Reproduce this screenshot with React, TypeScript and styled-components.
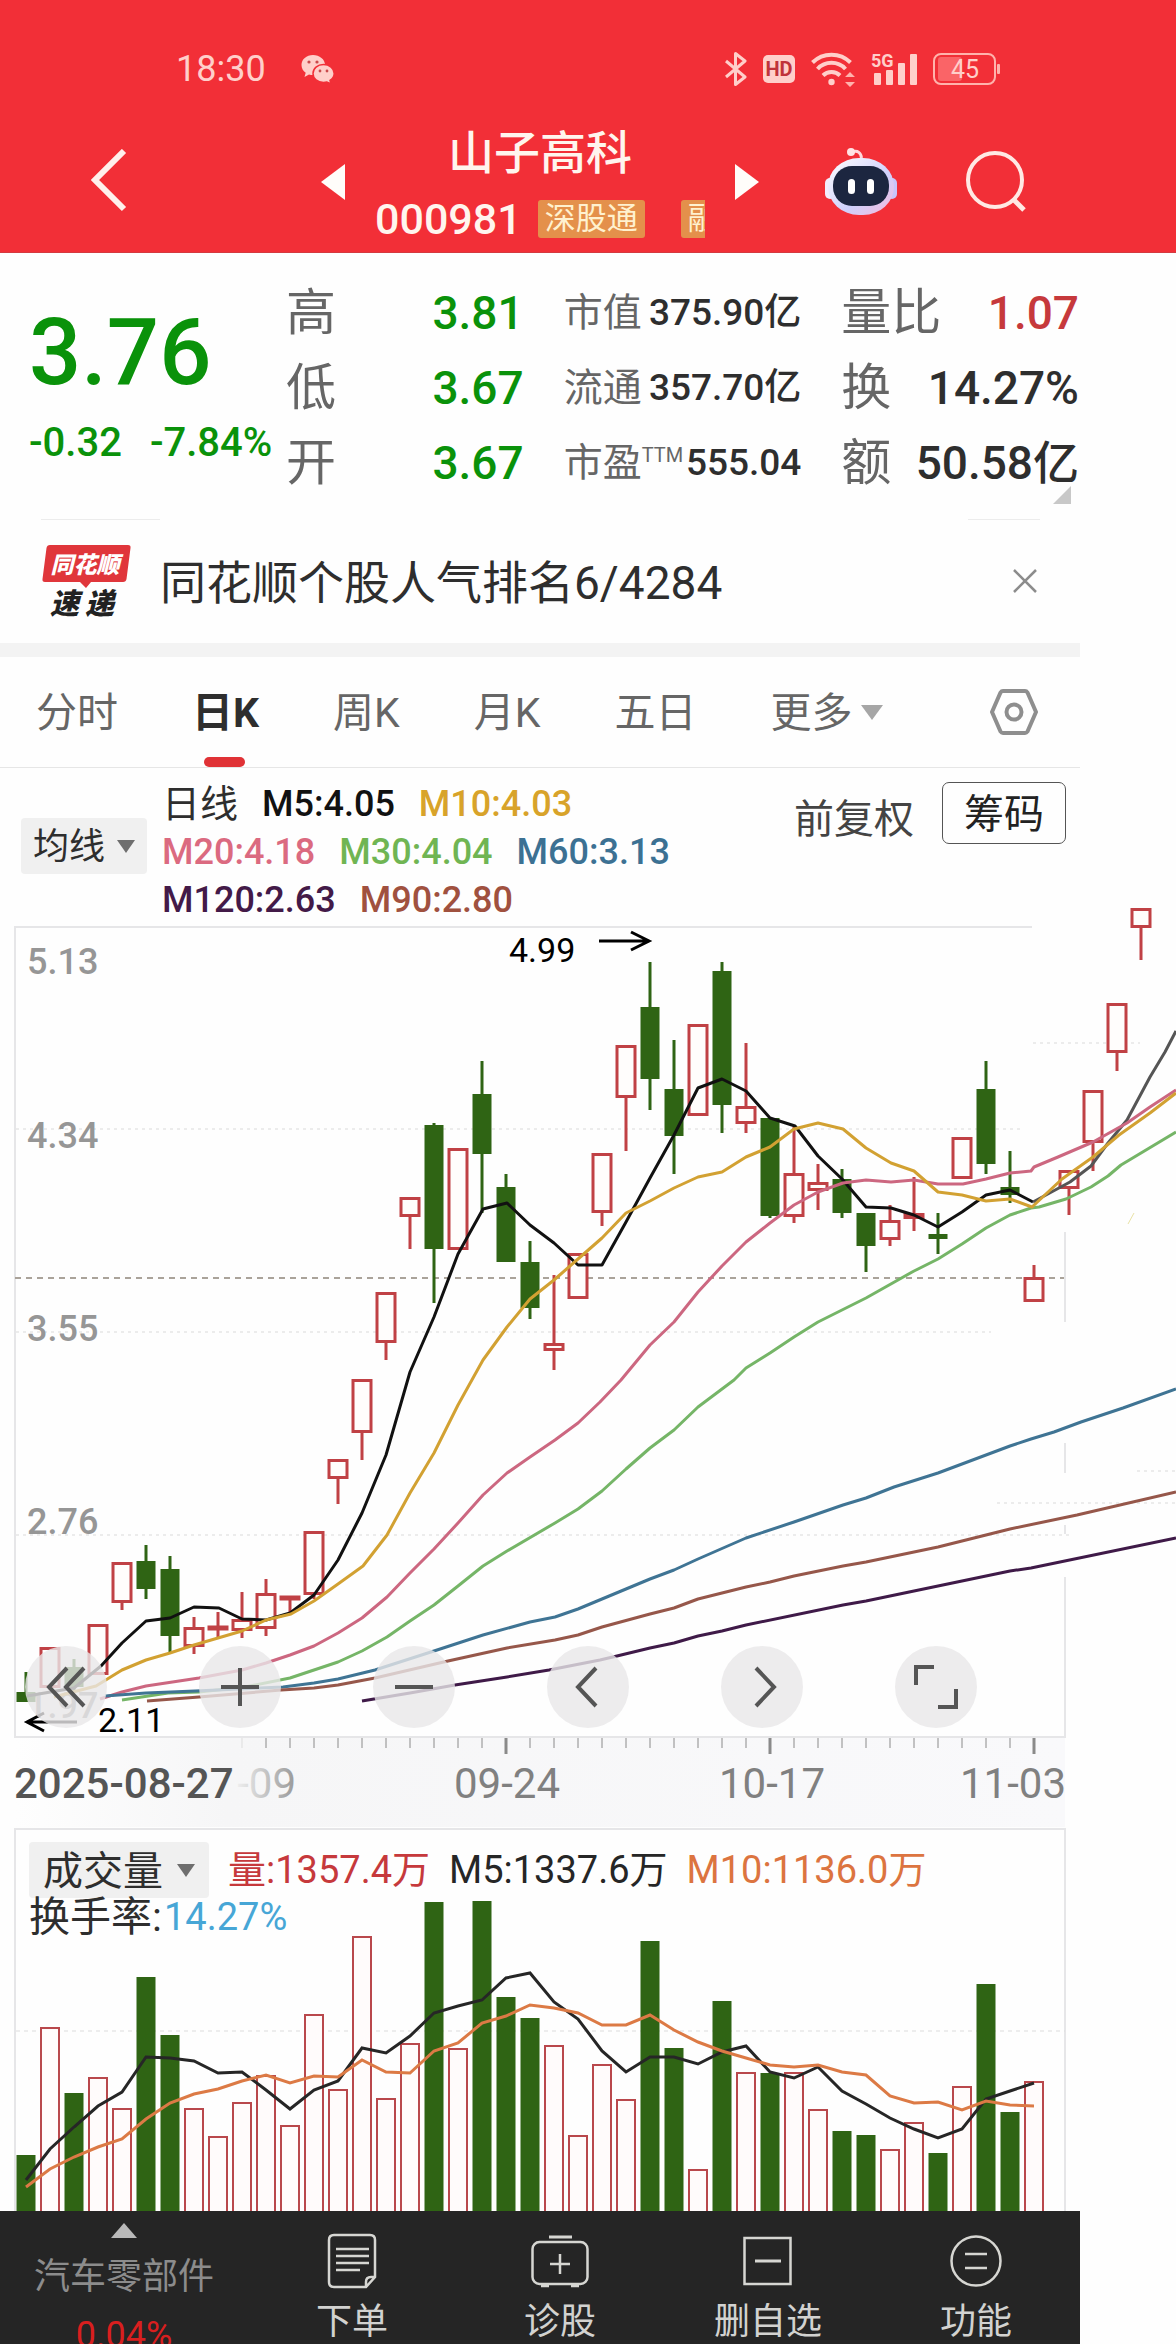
import React from "react";
import styled, { createGlobalStyle } from "styled-components";

const GlobalStyle = createGlobalStyle`
  *, *::before, *::after { box-sizing: border-box; }
  body {
    margin: 0;
    background: #fefefe;
    color: #2e2e2e;
    font-family: Roboto, "Noto Sans CJK SC", sans-serif;
  }
  button, select {
    margin: 0;
    padding: 0;
    border: 0;
    background: none;
    color: inherit;
    font: inherit;
    appearance: none;
    cursor: pointer;
  }
  svg { display: block; }
`;

const GREEN = "#0a920a";
const RED = "#c6393c";

/* ---------- header ---------- */

const Header = styled.header`
  background: #f22f37;
  color: #fff5ee;
  height: 253px;
  padding-top: 44px;
  border-bottom: 1px solid #d43a40;
`;

const StatusBar = styled.div`
  display: flex;
  align-items: center;
  justify-content: space-between;
  height: 50px;
  padding: 0 176px 0 176px;
  color: #ffcfca;
`;

const StatusGroup = styled.div<{ $gap: number }>`
  display: flex;
  align-items: center;
  gap: ${(p) => p.$gap}px;
`;

const Clock = styled.time`
  font-size: 36px;
  line-height: 50px;
`;

const TitleBar = styled.div`
  display: flex;
  align-items: center;
  padding: 18px 152px 0 91px;
  height: 158px;
`;

const IconButton = styled.button<{ $before?: number }>`
  flex: none;
  margin-left: ${(p) => p.$before ?? 0}px;
`;

const StockTitle = styled.div`
  width: 330px;
  margin: 0 30px;
  flex: none;
`;

const StockName = styled.h1`
  margin: 0 0 14px;
  font-size: 46px;
  line-height: 60px;
  font-weight: 500;
  text-align: center;
`;

const CodeRow = styled.div`
  display: flex;
  align-items: center;
  overflow-x: clip;
  height: 44px;
`;

const Code = styled.span`
  font-size: 43px;
  line-height: 44px;
  font-weight: 500;
  margin-right: 16px;
`;

const Badge = styled.span`
  flex: none;
  margin-right: 36px;
  padding: 0 7px;
  border-radius: 3px;
  background: #e4904b;
  color: #fff1cf;
  font-size: 31px;
  line-height: 38px;
`;

/* ---------- quote ---------- */

const Main = styled.main`
  --rail: 96px;
`;

const Quote = styled.section`
  position: relative;
  display: flex;
  height: 266px;
  margin-right: var(--rail);
`;

const PriceBlock = styled.div`
  flex: 0 0 286px;
  padding: 50px 0 0 29px;
  color: ${GREEN};
  font-weight: 500;
  white-space: nowrap;
`;

const Price = styled.div`
  font-size: 92px;
  line-height: 100px;
`;

const Change = styled.div`
  display: flex;
  gap: 28px;
  margin-top: 18px;
  font-size: 40px;
  line-height: 44px;
`;

const Stats = styled.div`
  flex: 1;
  display: grid;
  grid-template-columns: repeat(3, 1fr);
  column-gap: 40px;
  padding: 22px 1px 0 0;
`;

const StatColumn = styled.dl<{ $large: boolean }>`
  margin: 0;
  --label: ${(p) => (p.$large ? 50 : 39)}px;
  --value: ${(p) => (p.$large ? 46 : 37)}px;
`;

const Stat = styled.div`
  display: flex;
  align-items: center;
  justify-content: space-between;
  height: 75px;
  white-space: nowrap;
`;

const StatLabel = styled.dt`
  display: flex;
  font-size: var(--label);
  line-height: 60px;
  color: #666;
`;

const Ttm = styled.span`
  font-size: 20px;
  line-height: 44px;
`;

const StatValue = styled.dd<{ $color?: string }>`
  margin: 0;
  font-size: var(--value);
  line-height: 60px;
  font-weight: 500;
  color: ${(p) => p.$color ?? "#2e2e2e"};
`;

const Corner = styled.span`
  position: absolute;
  right: 9px;
  bottom: 15px;
  border-left: 18px solid transparent;
  border-bottom: 18px solid #c8c8c8;
`;

/* ---------- news ---------- */

const News = styled.section`
  position: relative;
  display: flex;
  align-items: center;
  height: 124px;
  margin-right: var(--rail);
  padding: 0 43px 0 42px;
  &::before, &::after {
    content: "";
    position: absolute;
    top: 0;
    height: 1px;
    background: #ececec;
  }
  &::before { left: 41px; width: 119px; }
  &::after { right: 40px; width: 72px; }
`;

const NewsText = styled.a`
  flex: 1;
  margin-left: 28px;
  padding-top: 3px;
  color: #2e2e2e;
  font-size: 46px;
  line-height: 60px;
  text-decoration: none;
`;

const Divider = styled.div`
  height: 14px;
  margin-right: var(--rail);
  background: #f3f3f3;
`;

/* ---------- tabs ---------- */

const Tabs = styled.nav`
  display: flex;
  align-items: stretch;
  gap: 74px;
  height: 111px;
  margin-right: var(--rail);
  padding: 0 42px 0 36px;
  border-bottom: 1px solid #e6e6e6;
`;

const Tab = styled.button<{ $active?: boolean }>`
  position: relative;
  padding-top: 3px;
  font-size: 41px;
  line-height: 107px;
  font-weight: ${(p) => (p.$active ? 700 : 400)};
  color: ${(p) => (p.$active ? "#2e2e2e" : "#666")};
  &::after {
    content: "";
    display: ${(p) => (p.$active ? "block" : "none")};
    position: absolute;
    left: 50%;
    bottom: 0;
    width: 41px;
    height: 10px;
    margin-left: -22px;
    border-radius: 5px;
    background: #e03236;
  }
`;

const MoreField = styled.label`
  display: flex;
  align-items: center;
  gap: 8px;
  color: #666;
  font-size: 41px;
`;

const Settings = styled.button`
  margin-left: auto;
`;

const Select = styled.select`
  padding-top: 3px;
  line-height: 53px;
  outline: none;
`;

const Caret = styled.span<{ $size: number; $color: string }>`
  width: 0;
  height: 0;
  border: ${(p) => p.$size}px solid transparent;
  border-bottom: 0;
  border-top: ${(p) => p.$size + 4}px solid ${(p) => p.$color};
`;

/* ---------- averages legend ---------- */

const Legend = styled.section`
  display: flex;
  align-items: flex-start;
  height: 159px;
  margin-right: var(--rail);
  padding: 12px 14px 0 21px;
`;

const Dropdown = styled.label<{ $size: number; $pad: number; $gap: number }>`
  display: flex;
  align-items: center;
  gap: ${(p) => p.$gap}px;
  flex: none;
  padding: 0 ${(p) => p.$pad}px;
  border-radius: 4px;
  background: #f0f0f0;
  font-size: ${(p) => p.$size}px;
  line-height: 56px;
`;

const AverageDropdown = styled(Dropdown)`
  margin-top: 38px;
`;

const Averages = styled.div`
  flex: 1;
  margin-left: 15px;
`;

const AverageLine = styled.div`
  display: flex;
  gap: 24px;
  font-size: 36px;
  line-height: 48px;
  font-weight: 500;
  white-space: nowrap;
`;

const Value = styled.span<{ $color?: string }>`
  color: ${(p) => p.$color ?? "#111"};
`;

const AverageTitle = styled.span`
  font-size: 38px;
  font-weight: 400;
`;

const Adjust = styled.button`
  margin: 10px 28px 0 0;
  color: #444;
  font-size: 40px;
  line-height: 60px;
`;

const Chips = styled.button`
  margin-top: 2px;
  padding: 3px 21px 0;
  border: 1px solid #555;
  border-radius: 7px;
  color: #222;
  font-size: 40px;
  line-height: 57px;
`;

/* ---------- charts ---------- */

const ChartBox = styled.section`
  position: relative;
`;

const ChartSvg = styled.svg`
  width: 100%;
  height: auto;
  overflow: visible;
  font-family: Roboto, sans-serif;
`;

const ChartControls = styled.div`
  position: absolute;
  left: 25px;
  bottom: 100px;
  display: flex;
  gap: 92px;
`;

const RoundButton = styled.button`
  display: grid;
  place-items: center;
  width: 82px;
  height: 82px;
  border-radius: 50%;
  background: rgba(232, 231, 232, 0.8);
`;

const VolumeHead = styled.div`
  position: absolute;
  top: 14px;
  left: 29px;
  font-size: 38px;
`;

const VolumeRow = styled.div`
  display: flex;
  align-items: center;
  gap: 19px;
  line-height: 56px;
  white-space: nowrap;
`;

const Turnover = styled.div`
  display: flex;
  align-items: center;
  gap: 2px;
  font-size: 38px;
  line-height: 38px;
`;

const TurnoverLabel = styled.span`
  font-size: 41px;
`;

/* ---------- bottom bar ---------- */

const BottomBar = styled.nav`
  display: grid;
  grid-template-columns: 248px repeat(4, 1fr);
  height: 133px;
  margin-right: 96px;
  overflow: hidden;
  background: #252525;
`;

const Sector = styled.button`
  display: flex;
  flex-direction: column;
  align-items: center;
  padding-top: 12px;
  color: #8c8c8c;
  font-size: 36px;
  line-height: 44px;
`;

const SectorArrow = styled.span`
  border: 13px solid transparent;
  border-top: 0;
  border-bottom: 15px solid #b9b9b9;
  margin-bottom: 17px;
`;

const SectorChange = styled.span`
  margin-top: 14px;
  color: #d91f1f;
`;

const BarItem = styled.button`
  display: flex;
  flex-direction: column;
  align-items: center;
  padding-top: 22px;
  gap: 9px;
  color: #d2d2d0;
  font-size: 36px;
  line-height: 48px;
`;

/* ---------- data ---------- */

type Candle = [up: 0 | 1, high: number, top: number, bottom: number, low: number];

const FIRST_X = 26;
const STEP = 24;

const candles: Candle[] = [
  [0, 1672, 1692, 1702, 1702], [1, 1647, 1647, 1688, 1690], [0, 1659, 1667, 1687, 1692],
  [1, 1624, 1624, 1675, 1675], [1, 1562, 1562, 1603, 1610], [0, 1545, 1561, 1589, 1599],
  [0, 1556, 1569, 1636, 1652], [1, 1617, 1627, 1647, 1654], [1, 1612, 1627, 1629, 1637],
  [1, 1592, 1619, 1631, 1638], [1, 1579, 1593, 1629, 1636], [1, 1597, 1597, 1599, 1613],
  [1, 1531, 1531, 1595, 1599], [1, 1459, 1459, 1479, 1504], [1, 1379, 1379, 1433, 1460],
  [1, 1292, 1292, 1343, 1360], [1, 1197, 1197, 1217, 1249], [0, 1123, 1125, 1249, 1303],
  [1, 1148, 1148, 1250, 1250], [0, 1061, 1094, 1154, 1213], [0, 1174, 1187, 1262, 1262],
  [0, 1241, 1262, 1308, 1319], [1, 1275, 1343, 1351, 1370], [1, 1253, 1253, 1299, 1299],
  [1, 1153, 1153, 1213, 1226], [1, 1045, 1045, 1098, 1151], [0, 962, 1007, 1079, 1110],
  [0, 1040, 1089, 1136, 1174], [1, 1024, 1024, 1116, 1116], [0, 962, 971, 1105, 1133],
  [1, 1043, 1106, 1124, 1133], [0, 1118, 1118, 1216, 1218], [1, 1127, 1173, 1217, 1223],
  [1, 1164, 1182, 1191, 1210], [0, 1169, 1179, 1213, 1218], [0, 1213, 1213, 1246, 1272],
  [1, 1205, 1220, 1240, 1246], [1, 1177, 1213, 1219, 1231], [0, 1213, 1234, 1239, 1254],
  [1, 1137, 1137, 1179, 1179], [0, 1061, 1089, 1164, 1174], [0, 1151, 1187, 1195, 1203],
  [1, 1265, 1277, 1302, 1302],
];

const forecast: { x: number; candle: Candle }[] = [
  { x: 1069, candle: [1, 1170, 1170, 1189, 1215] },
  { x: 1093, candle: [1, 1090, 1090, 1143, 1171] },
  { x: 1117, candle: [1, 1003, 1003, 1053, 1071] },
  { x: 1141, candle: [1, 908, 908, 928, 960] },
];

const averageLines: { color: string; points: string }[] = [
  { color: "#111", points: "27,1696 74,1688 101,1666 122,1643 146,1621 170,1618 194,1607 219,1608 242,1619 266,1620 290,1613 314,1595 338,1560 362,1513 386,1455 410,1372 434,1317 458,1254 483,1209 507,1203 530,1225 554,1243 578,1265 602,1265 626,1222 650,1178 674,1135 698,1088 722,1079 746,1091 770,1118 795,1126 818,1156 842,1179 866,1207 891,1208 914,1215 938,1227 962,1212 986,1195 1010,1190 1033,1202" },
  { color: "#555", points: "1033,1202 1070,1182 1091,1166 1108,1143 1127,1120 1150,1077 1165,1052 1176,1031" },
  { color: "#75b567", points: "122,1700 168,1693 199,1692 245,1687 290,1678 338,1662 362,1651 387,1637 410,1621 434,1605 458,1586 483,1566 507,1551 555,1523 578,1509 602,1491 626,1469 650,1448 674,1430 698,1407 734,1380 746,1368 770,1353 794,1337 818,1322 866,1298 914,1271 938,1259 962,1244 986,1228 1010,1215 1031,1208 1039,1207 1066,1199 1091,1187 1108,1176 1121,1165 1176,1132" },
  { color: "#cc6780", points: "100,1699 122,1692 146,1686 199,1678 242,1670 266,1663 290,1655 314,1646 338,1633 362,1618 387,1597 410,1573 434,1549 458,1523 483,1495 507,1473 530,1457 555,1440 578,1423 600,1402 621,1380 650,1345 674,1322 698,1292 722,1266 746,1242 770,1223 794,1205 818,1192 843,1183 866,1180 891,1182 914,1180 938,1184 963,1184 986,1179 1010,1173 1031,1171 1034,1167 1058,1157 1093,1142 1127,1123 1150,1107 1176,1090" },
  { color: "#d2a132", points: "54,1697 96,1686 122,1670 146,1660 170,1653 194,1645 242,1631 266,1620 291,1614 314,1601 338,1584 363,1566 387,1535 410,1493 434,1453 458,1405 483,1360 507,1327 530,1299 554,1280 578,1259 602,1238 626,1213 650,1201 674,1188 698,1177 722,1172 746,1157 770,1147 794,1129 818,1123 843,1129 866,1148 891,1163 914,1171 938,1192 962,1195 986,1201 1010,1199 1032,1207 1062,1179 1093,1157 1119,1135 1150,1113 1176,1093" },
  { color: "#3f7494", points: "105,1696 146,1693 195,1691 283,1687 314,1683 338,1679 375,1670 434,1651 483,1635 530,1622 555,1617 578,1609 602,1599 626,1589 650,1579 674,1570 698,1559 746,1538 794,1522 843,1505 866,1498 894,1487 938,1473 1010,1446 1031,1439 1054,1432 1081,1422 1123,1408 1176,1389" },
  { color: "#96574a", points: "147,1701 199,1697 281,1690 314,1688 338,1685 375,1678 448,1661 507,1648 555,1640 578,1635 602,1627 650,1614 674,1608 698,1599 746,1587 770,1582 794,1576 843,1566 866,1562 938,1547 1010,1529 1077,1515 1176,1492" },
  { color: "#3f1a48", points: "362,1701 410,1693 455,1685 507,1677 549,1670 600,1660 617,1656 650,1648 674,1643 698,1636 722,1631 746,1625 843,1605 866,1601 1010,1571 1031,1568 1176,1538" },
];

const volumeTops = [
  2155, 2027, 2093, 2077, 2108, 1977, 2035, 2108, 2136, 2102, 2075, 2125, 2014, 2089, 1936,
  2098, 2043, 1902, 2048, 1901, 1997, 2018, 2045, 2135, 2064, 2099, 1941, 2048, 2169, 2001,
  2072, 2073, 2072, 2109, 2131, 2135, 2149, 2122, 2153, 2086, 1984, 2112, 2081,
];

const volumeM5 = [
  2180, 2149, 2127, 2106, 2092, 2057, 2058, 2061, 2073, 2072, 2090, 2109, 2090, 2081, 2048,
  2053, 2036, 2013, 2006, 2000, 1978, 1973, 2002, 2019, 2051, 2072, 2057, 2057, 2064, 2052,
  2046, 2072, 2078, 2067, 2091, 2104, 2118, 2129, 2138, 2129, 2099, 2091, 2083,
];

const volumeM10 = [
  2187, 2169, 2157, 2147, 2139, 2119, 2103, 2094, 2089, 2081, 2075, 2083, 2076, 2077, 2060,
  2072, 2073, 2051, 2043, 2023, 2016, 2005, 2008, 2013, 2025, 2025, 2015, 2030, 2042, 2051,
  2058, 2065, 2067, 2065, 2072, 2075, 2096, 2103, 2102, 2110, 2101, 2105, 2106,
];

const priceLabels = [
  { text: "5.13", y: 974 }, { text: "4.34", y: 1148 }, { text: "3.55", y: 1341 },
  { text: "2.76", y: 1534 }, { text: "1.97", y: 1718 },
];

const statColumns = [
  { large: true, rows: [
    { label: "高", value: "3.81", color: GREEN },
    { label: "低", value: "3.67", color: GREEN },
    { label: "开", value: "3.67", color: GREEN },
  ] },
  { large: false, rows: [
    { label: "市值", value: "375.90亿" },
    { label: "流通", value: "357.70亿" },
    { label: "市盈", sup: "TTM", value: "555.04" },
  ] },
  { large: true, rows: [
    { label: "量比", value: "1.07", color: RED },
    { label: "换", value: "14.27%" },
    { label: "额", value: "50.58亿" },
  ] },
] as { large: boolean; rows: { label: string; sup?: string; value: string; color?: string }[] }[];

const averageRows: { title?: string; values: { text: string; color?: string }[] }[] = [
  { title: "日线", values: [{ text: "M5:4.05" }, { text: "M10:4.03", color: "#d8a32a" }] },
  { values: [{ text: "M20:4.18", color: "#db6a80" }, { text: "M30:4.04", color: "#70b553" }, { text: "M60:3.13", color: "#3c7193" }] },
  { values: [{ text: "M120:2.63", color: "#431a48" }, { text: "M90:2.80", color: "#a0513f" }] },
];

/* ---------- icons ---------- */

const WechatIcon = () => (
  <svg width="34" height="30" viewBox="0 0 34 30" fill="#ffcfca">
    <path d="M12 1C5.500 1 .5 5.400.5 11c0 3.200 1.600 5.900 4.200 7.800L3.500 23l4.500-2.500c1.300.4 2.600.5 4 .5C18.500 21 24 16.600 24 11S18.500 1 12 1z" />
    <path d="M22.500 10.500c-6 0-10.500 4-10.500 9s4.500 9 10.500 9c1.200 0 2.300-.2 3.400-.5L30 30l-1-3.700c2.600-1.700 4.200-4.200 4.200-6.900 0-5-4.700-8.900-10.700-8.900z" stroke="#f22f37" strokeWidth="1.500" />
    <g fill="#c94a4c"><circle cx="8" cy="8" r="1.600" /><circle cx="16" cy="8" r="1.600" /><circle cx="19" cy="17" r="1.400" /><circle cx="26" cy="17" r="1.400" /></g>
  </svg>
);

const BluetoothIcon = () => (
  <svg width="22" height="36" viewBox="0 0 22 36" fill="none" stroke="#ffcfca" strokeWidth="3">
    <path d="M1 10L20 26 10.500 33.500V2.500L20 10 1 26" strokeLinejoin="round" />
  </svg>
);

const HdIcon = () => (
  <svg width="32" height="28" viewBox="0 0 32 28">
    <rect width="32" height="28" rx="5" fill="#ffcfca" />
    <text x="16" y="21" textAnchor="middle" fontFamily="Roboto" fontWeight="700" fontSize="20" fill="#c0333a">HD</text>
  </svg>
);

const WifiIcon = () => (
  <svg width="44" height="36" viewBox="0 0 44 36" fill="none" stroke="#ffcfca" strokeWidth="4">
    <path d="M1.500 11.500a27 27 0 0 1 38 0" />
    <path d="M6.500 18a19 19 0 0 1 28 0" />
    <path d="M12 24.500a12 12 0 0 1 17 0" />
    <circle cx="20.500" cy="31" r="3.200" fill="#ffcfca" stroke="none" />
    <path d="M39 21l5 5H34zM39 36l5-5H34z" fill="#ffb3ac" stroke="none" />
  </svg>
);

const SignalIcon = () => (
  <svg width="46" height="36" viewBox="0 0 46 36" fill="#ffcfca">
    <text x="0" y="16" fontFamily="Roboto" fontWeight="700" fontSize="18">5G</text>
    <rect x="3" y="22" width="7" height="12" rx="1" />
    <rect x="15" y="19" width="7" height="15" rx="1" />
    <rect x="27" y="12" width="7" height="22" rx="1" />
    <rect x="39" y="3" width="7" height="31" rx="1" />
  </svg>
);

const BatteryIcon = () => (
  <svg width="67" height="32" viewBox="0 0 67 32">
    <rect x="5" y="4" width="24" height="24" rx="3" fill="#fa6467" />
    <rect x="1" y="1" width="61" height="30" rx="7" fill="none" stroke="#ffb3ac" strokeWidth="2" />
    <rect x="64" y="11" width="3" height="10" rx="1" fill="#ffb3ac" />
    <text x="32" y="25" textAnchor="middle" fontFamily="Roboto" fontSize="25" fill="#ffcfca">45</text>
  </svg>
);

const RobotIcon = () => (
  <svg width="72" height="68" viewBox="0 0 72 68">
    <defs>
      <linearGradient id="shell" x1="0" y1="0" x2="1" y2="1">
        <stop offset="0" stopColor="#fff" />
        <stop offset="0.600" stopColor="#cfd0fb" />
        <stop offset="1" stopColor="#f7b9dc" />
      </linearGradient>
    </defs>
    <path d="M27 4c6-2 9 1 9.500 6" fill="none" stroke="#ffd8dc" strokeWidth="3" />
    <circle cx="26" cy="4" r="4" fill="#ffe3e5" />
    <rect x="0" y="30" width="10" height="21" rx="5" fill="#f3ecfb" />
    <rect x="62" y="30" width="10" height="21" rx="5" fill="#c9c5fa" />
    <rect x="3" y="10" width="66" height="57" rx="31" fill="url(#shell)" />
    <rect x="8" y="18" width="56" height="40" rx="19" fill="#1c2640" />
    <rect x="23" y="31" width="7" height="15" rx="3.500" fill="#fff" />
    <rect x="42" y="31" width="7" height="15" rx="3.500" fill="#fff" />
  </svg>
);

const LogoSvg = styled.svg`
  overflow: visible;
`;

const NewsLogo = () => (
  <LogoSvg width="90" height="74" viewBox="0 0 90 74" fontFamily="'Noto Sans CJK SC', sans-serif" fontStyle="italic" fontWeight="900">
    <path d="M8 1h78q3 0 2.500 3l-4 31q-.5 3-3.500 3H49l-5 6-6-6H3q-3 0-2.500-3l4-31Q5 1 8 1z" fill="#e0363b" />
    <text x="43" y="29" textAnchor="middle" fontSize="23" fill="#fff">同花顺</text>
    <text x="8" y="70" fontSize="29" fill="#222">速</text>
    <text x="43" y="70" fontSize="29" fill="#222">递</text>
  </LogoSvg>
);

const OrderIcon = () => (
  <svg width="50" height="56" viewBox="0 0 50 56" fill="none" stroke="#d6d6d2" strokeWidth="2.500">
    <path d="M7 2h36q5 0 5 5v37l-9 10H7q-5 0-5-5V7q0-5 5-5zM48 44h-4q-5 0-5 5v5" />
    <path d="M9 16h33M9 23h33M9 30h33M9 37h24" />
  </svg>
);

const DiagnoseIcon = () => (
  <svg width="58" height="56" viewBox="0 0 58 56" fill="none" stroke="#d6d6d2" strokeWidth="2.500">
    <path d="M18 4h23" strokeWidth="3" />
    <rect x="1.500" y="9" width="55" height="42" rx="7" />
    <path d="M29 21v20M19 31h20M10 53h8M40 53h8" />
  </svg>
);

const RemoveIcon = () => (
  <svg width="50" height="56" viewBox="0 0 50 56" fill="none" stroke="#d6d6d2" strokeWidth="2.500">
    <rect x="1.500" y="5" width="46" height="46" />
    <path d="M12 28h26" strokeWidth="3" />
  </svg>
);

const FunctionIcon = () => (
  <svg width="52" height="56" viewBox="0 0 52 56" fill="none" stroke="#d6d6d2" strokeWidth="2.500">
    <circle cx="26" cy="28" r="24.500" />
    <path d="M15 21h22M15 35h22" />
  </svg>
);

const controls = [
  { name: "最早", path: "M29 9L11 28l18 19M46 9L28 28l18 19" },
  { name: "放大", path: "M28 9v38M9 28h38" },
  { name: "缩小", path: "M9 28h38" },
  { name: "左移", path: "M36 9L18 28l18 19" },
  { name: "右移", path: "M22 9l18 19-18 19" },
  { name: "全屏", path: "M8 26V8h18M48 30v18H30" },
];

const barItems = [
  { text: "下单", Icon: OrderIcon },
  { text: "诊股", Icon: DiagnoseIcon },
  { text: "删自选", Icon: RemoveIcon },
  { text: "功能", Icon: FunctionIcon },
];

/* ---------- chart parts ---------- */

function CandleMark({ x, candle }: { x: number; candle: Candle }) {
  const [up, high, top, bottom, low] = candle;
  const color = up ? "#c04145" : "#2f6414";
  const half = up ? 9 : 9.5;
  const inset = up && bottom - top > 3 ? 1.5 : 0;
  return (
    <g stroke={color} strokeWidth="3">
      {high < top && <path d={`M${x} ${high}V${top}`} />}
      {low > bottom && <path d={`M${x} ${bottom}V${low}`} />}
      <rect
        x={x - half}
        y={top + inset}
        width={half * 2}
        height={bottom - top - inset * 2}
        fill={up ? "#fffdfc" : color}
        strokeWidth={up ? 3 : 0}
      />
    </g>
  );
}

function PriceChart() {
  return (
    <ChartSvg viewBox="0 927 1176 901" role="img" aria-label="日K">
      <defs>
        <linearGradient id="axisShade" x1="0" y1="0" x2="1" y2="0">
          <stop offset="0" stopColor="#f6f6f7" stopOpacity="0" />
          <stop offset="0.200" stopColor="#f6f6f7" />
          <stop offset="1" stopColor="#f9f9fb" />
        </linearGradient>
        <linearGradient id="dateFade" x1="0" y1="0" x2="1" y2="0">
          <stop offset="0" stopColor="#eee" />
          <stop offset="1" stopColor="#999" />
        </linearGradient>
      </defs>
      <rect x="16" y="1738" width="1049" height="89" fill="url(#axisShade)" />
      <g fill="none" stroke="#e6e6e8" strokeWidth="2">
        <path d="M1032 927H15V1737H1065V1577M1065 1232V1322M1065 1443V1473M1065 1525V1534" />
      </g>
      <g stroke="#ececec" strokeWidth="2" strokeDasharray="3 4">
        <path d="M16 1129H1024M16 1332H991M16 1535H1069M1033 1043H1140M997 1503H1176M1137 1471H1176" />
      </g>
      <path d="M15 1278H1064" stroke="#aaa39a" strokeWidth="2" strokeDasharray="6 5" />
      <path d="M1128 1224L1134 1213" stroke="#e9e2a5" strokeWidth="1" />
      <g fill="#969696" fontSize="36" fontWeight="500">
        {priceLabels.map((l) => <text key={l.text} x="27" y={l.y}>{l.text}</text>)}
      </g>
      {candles.map((c, i) => <CandleMark key={i} x={FIRST_X + i * STEP} candle={c} />)}
      {forecast.map((f) => <CandleMark key={f.x} x={f.x} candle={f.candle} />)}
      {averageLines.map((l) => (
        <polyline key={l.color} points={l.points} fill="none" stroke={l.color} strokeWidth="3" strokeLinejoin="round" />
      ))}
      <g fill="none" stroke="#000" strokeWidth="3">
        <path d="M599 941H649M631 932L649 941 631 950" />
        <path d="M77 1722H27M44 1713L27 1722 44 1731" />
      </g>
      <g fontSize="34" fill="#000">
        <text x="509" y="962">4.99</text>
        <text x="98" y="1732">2.11</text>
      </g>
      {candles.map((_, i) => {
        if (i < 9) return null;
        const major = i === 20 || i === 31 || i === 42;
        const x = FIRST_X + i * STEP;
        return (
          <path key={i} d={`M${x} 1738V${major ? 1754 : 1748}`} stroke={i === 9 ? "#ddd" : "#8a8a8a"} strokeWidth={major ? 3 : 1} />
        );
      })}
      <g fontSize="42">
        <text x="14" y="1798" fill="#555" fontWeight="500">2025-08-27</text>
        <text x="296" y="1798" fill="url(#dateFade)" textAnchor="end">-09</text>
        <g fill="#808080">
          <text x="507" y="1798" textAnchor="middle">09-24</text>
          <text x="772" y="1798" textAnchor="middle">10-17</text>
          <text x="1066" y="1798" textAnchor="end">11-03</text>
        </g>
      </g>
    </ChartSvg>
  );
}

const toPoints = (ys: number[]) => ys.map((y, i) => `${FIRST_X + i * STEP},${y}`).join(" ");

function VolumeChart() {
  return (
    <ChartSvg viewBox="0 1828 1176 383" role="img" aria-label="成交量">
      <path d="M15 2211V1829H1065V2211" fill="none" stroke="#e6e6e8" strokeWidth="2" />
      <path d="M16 2031H1065" stroke="#dcdcdc" strokeWidth="1" strokeDasharray="4 4" />
      {volumeTops.map((top, i) => {
        const x = FIRST_X + i * STEP;
        return candles[i][0] ? (
          <path key={i} d={`M${x - 9} 2211V${top + 1}H${x + 9}V2211`} fill="#fffbfb" stroke="#b9484c" strokeWidth="2" />
        ) : (
          <rect key={i} x={x - 9.5} y={top} width="19" height={2211 - top} fill="#2f6414" />
        );
      })}
      <polyline points={toPoints(volumeM5)} fill="none" stroke="#262626" strokeWidth="3" />
      <polyline points={toPoints(volumeM10)} fill="none" stroke="#dc7a45" strokeWidth="3" />
    </ChartSvg>
  );
}

export default function App() {
  return (
    <>
      <GlobalStyle />
      <Header>
        <StatusBar>
          <StatusGroup $gap={35}>
            <Clock>18:30</Clock>
            <WechatIcon />
          </StatusGroup>
          <StatusGroup $gap={16}>
            <BluetoothIcon />
            <HdIcon />
            <WifiIcon />
            <SignalIcon />
            <BatteryIcon />
          </StatusGroup>
        </StatusBar>
        <TitleBar>
          <IconButton aria-label="返回">
            <svg width="36" height="66" viewBox="0 0 36 66" fill="none" stroke="#fff0ec" strokeWidth="6"><path d="M33 2L4 31l29 29" /></svg>
          </IconButton>
          <IconButton $before={194} aria-label="上一只">
            <svg width="24" height="36" viewBox="0 0 24 36" fill="#fffdfa"><path d="M24 0v36L0 18z" /></svg>
          </IconButton>
          <StockTitle>
            <StockName>山子高科</StockName>
            <CodeRow>
              <Code>000981</Code>
              <Badge>深股通</Badge>
              <Badge>融</Badge>
            </CodeRow>
          </StockTitle>
          <IconButton aria-label="下一只">
            <svg width="24" height="36" viewBox="0 0 24 36" fill="#fffdfa"><path d="M0 0v36l24-18z" /></svg>
          </IconButton>
          <IconButton $before={66} aria-label="助手"><RobotIcon /></IconButton>
          <IconButton $before={69} aria-label="搜索">
            <svg width="60" height="62" viewBox="0 0 60 62" fill="none" stroke="#ffe9e4" strokeWidth="4"><circle cx="29" cy="29" r="27" /><path d="M47 48l11 11" strokeWidth="5" /></svg>
          </IconButton>
        </TitleBar>
      </Header>

      <Main>
        <Quote>
          <PriceBlock>
            <Price>3.76</Price>
            <Change><span>-0.32</span><span>-7.84%</span></Change>
          </PriceBlock>
          <Stats>
            {statColumns.map((col, i) => (
              <StatColumn key={i} $large={col.large}>
                {col.rows.map((r) => (
                  <Stat key={r.label}>
                    <StatLabel>{r.label}{r.sup && <Ttm>{r.sup}</Ttm>}</StatLabel>
                    <StatValue $color={r.color}>{r.value}</StatValue>
                  </Stat>
                ))}
              </StatColumn>
            ))}
          </Stats>
          <Corner />
        </Quote>

        <News>
          <NewsLogo />
          <NewsText href="#rank">同花顺个股人气排名6/4284</NewsText>
          <IconButton aria-label="关闭">
            <svg width="24" height="24" viewBox="0 0 24 24" stroke="#8c8c8c" strokeWidth="2.500"><path d="M1 1l22 22M23 1L1 23" /></svg>
          </IconButton>
        </News>
        <Divider />

        <Tabs>
          <Tab>分时</Tab>
          <Tab $active>日K</Tab>
          <Tab>周K</Tab>
          <Tab>月K</Tab>
          <Tab>五日</Tab>
          <MoreField>
            <Select defaultValue="more" aria-label="更多周期"><option value="more">更多</option></Select>
            <Caret $size={11} $color="#a6a6a6" />
          </MoreField>
          <Settings aria-label="设置">
            <svg width="48" height="48" viewBox="0 0 48 48" fill="none" stroke="#8e8e8e" strokeWidth="4" strokeLinejoin="round">
              <path d="M13 3h22q1.500 0 2.500 1.500L46 24l-8.500 19.500Q36.500 45 35 45H13q-1.500 0-2.500-1.500L2 24l8.500-19.500Q11.500 3 13 3z" />
              <circle cx="24" cy="24" r="7.500" />
            </svg>
          </Settings>
        </Tabs>

        <Legend>
          <AverageDropdown $size={36} $pad={12} $gap={11}>
            <Select defaultValue="ma" aria-label="主图指标"><option value="ma">均线</option></Select>
            <Caret $size={9} $color="#6e6e6e" />
          </AverageDropdown>
          <Averages>
            {averageRows.map((row, i) => (
              <AverageLine key={i}>
                {row.title && <AverageTitle>{row.title}</AverageTitle>}
                {row.values.map((v) => <Value key={v.text} $color={v.color}>{v.text}</Value>)}
              </AverageLine>
            ))}
          </Averages>
          <Adjust>前复权</Adjust>
          <Chips>筹码</Chips>
        </Legend>

        <ChartBox>
          <PriceChart />
          <ChartControls>
            {controls.map((c) => (
              <RoundButton key={c.name} aria-label={c.name}>
                <svg width="56" height="56" viewBox="0 0 56 56" fill="none" stroke="#555" strokeWidth="4"><path d={c.path} /></svg>
              </RoundButton>
            ))}
          </ChartControls>
        </ChartBox>

        <ChartBox>
          <VolumeChart />
          <VolumeHead>
            <VolumeRow>
              <Dropdown $size={40} $pad={14} $gap={14}>
                <Select defaultValue="vol" aria-label="副图指标"><option value="vol">成交量</option></Select>
                <Caret $size={9} $color="#6e6e6e" />
              </Dropdown>
              <Value $color="#c6393c">量:1357.4万</Value>
              <Value $color="#262626">M5:1337.6万</Value>
              <Value $color="#dc7440">M10:1136.0万</Value>
            </VolumeRow>
            <Turnover>
              <TurnoverLabel>换手率:</TurnoverLabel>
              <Value $color="#47a6d6">14.27%</Value>
            </Turnover>
          </VolumeHead>
        </ChartBox>
      </Main>

      <BottomBar>
        <Sector>
          <SectorArrow />
          <span>汽车零部件</span>
          <SectorChange>0.04%</SectorChange>
        </Sector>
        {barItems.map(({ text, Icon }) => (
          <BarItem key={text}>
            <Icon />
            <span>{text}</span>
          </BarItem>
        ))}
      </BottomBar>
    </>
  );
}
